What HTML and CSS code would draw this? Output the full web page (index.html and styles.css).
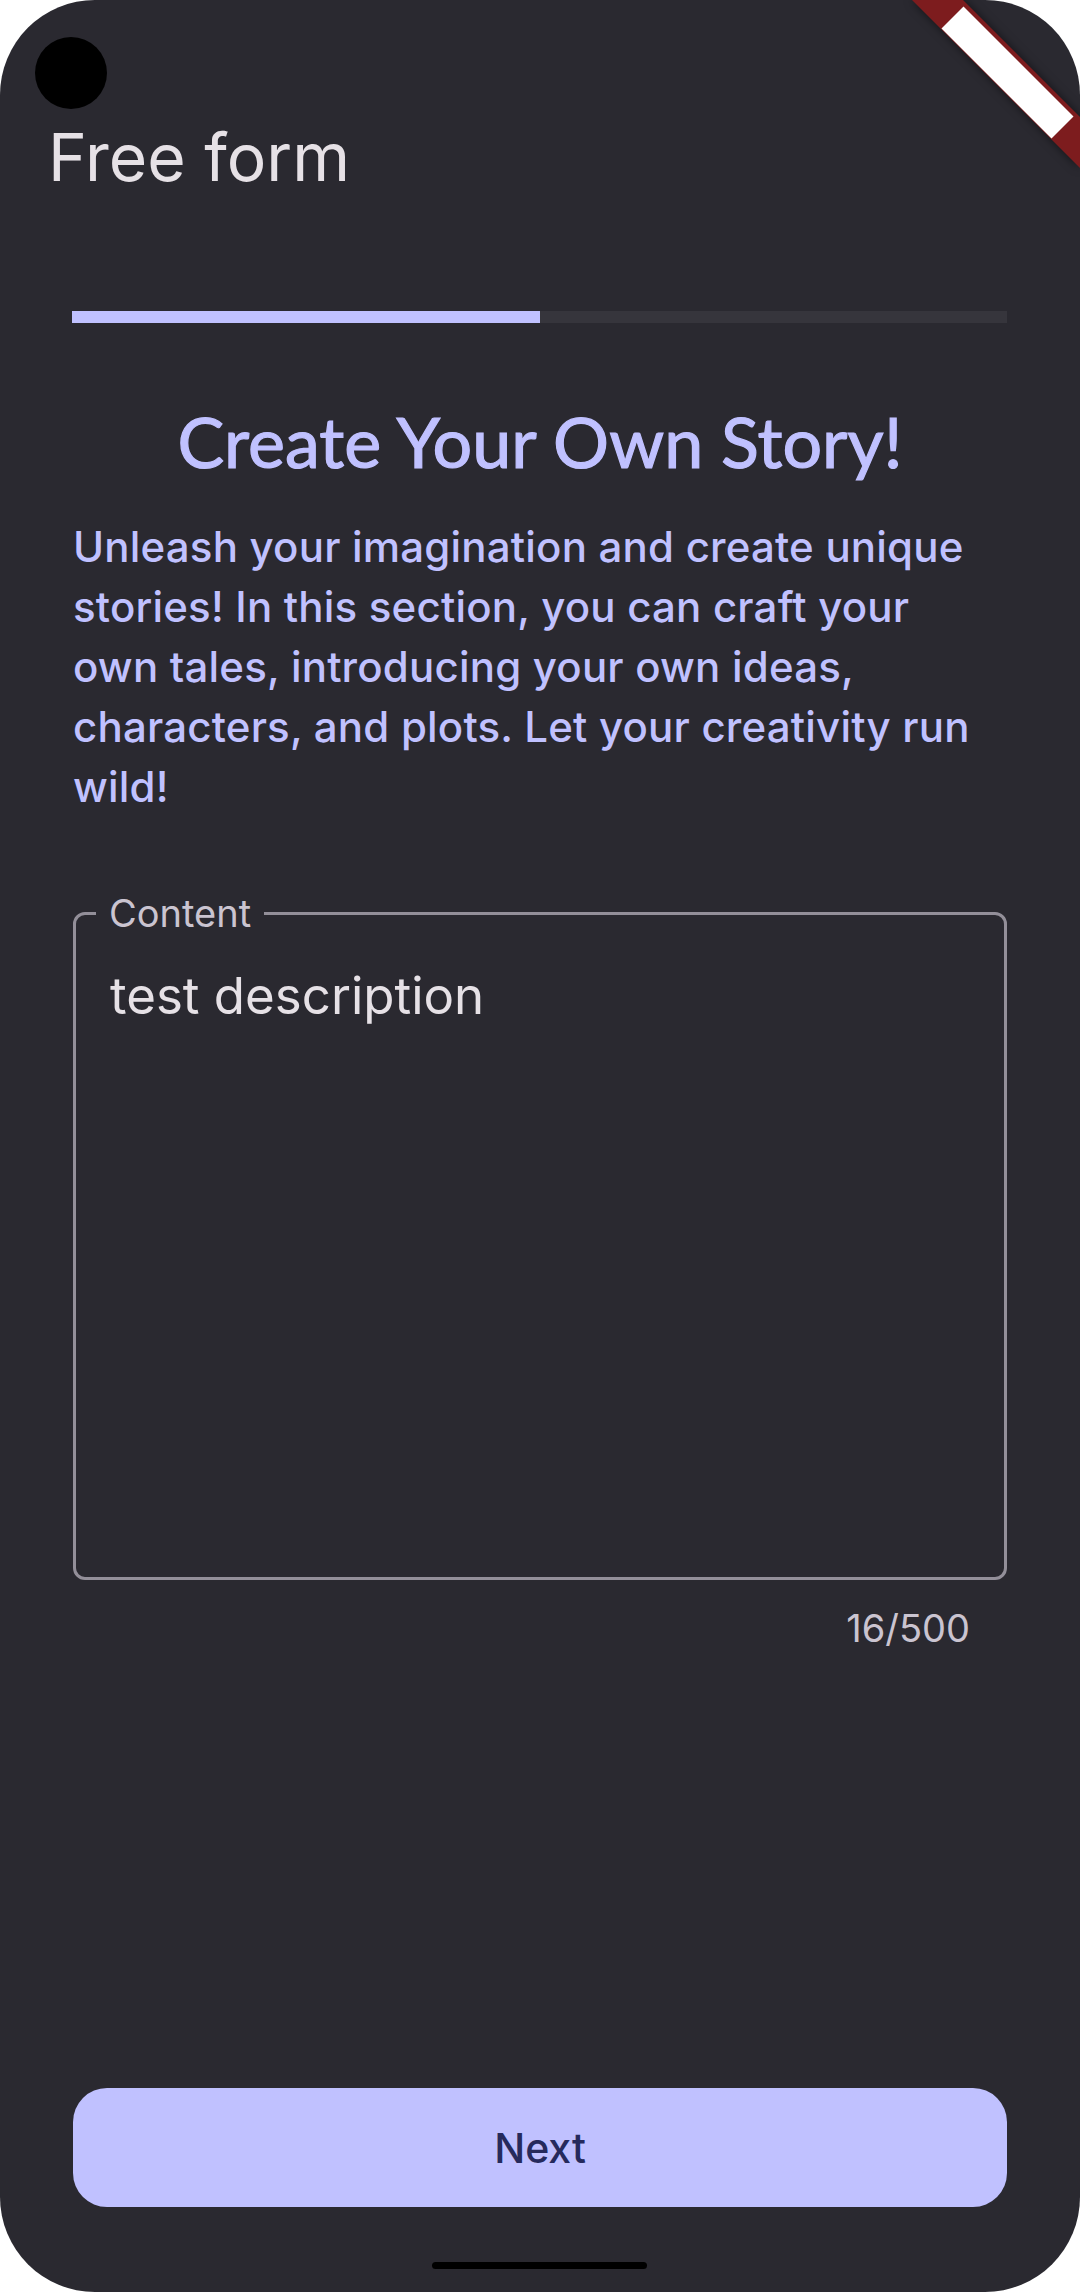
FILE: index.html
```html
<!DOCTYPE html>
<html lang="en">
<head>
<meta charset="utf-8">
<title>Free form</title>
<link rel="stylesheet" href="styles.css">
</head>
<body>
<div class="phone">
  <div class="camera"></div>
  <svg class="debug-banner" width="200" height="200" viewBox="0 0 200 200">
    <g class="banner-group">
      <polygon points="32,0 83,0 200,117 200,168" fill="#7d1c1e"/>
      <polygon points="61.5,28.5 83.5,6.5 193.5,116.5 171.5,138.5" fill="#ffffff"/>
    </g>
  </svg>

  <header class="appbar">
    <h1 class="appbar-title">Free form</h1>
  </header>

  <div class="progress"><div class="progress-fill" style="width:50%"></div></div>

  <h2 class="heading">Create Your Own Story!</h2>
  <p class="intro">Unleash your imagination and create unique stories! In this section, you can craft your own tales, introducing your own ideas, characters, and plots. Let your creativity run wild!</p>

  <fieldset class="field">
    <legend class="field-label">Content</legend>
    <div class="field-input">test description</div>
  </fieldset>
  <div class="counter">16/500</div>

  <div class="spacer"></div>

  <button class="next-btn">Next</button>

  <div class="home-indicator"></div>
</div>
</body>
</html>
```

FILE: styles.css
```css
* { box-sizing: border-box; }
html, body { margin: 0; padding: 0; background: #ffffff; }
body { width: 1080px; height: 2292px; overflow: hidden; }

.phone {
  position: relative;
  width: 1080px;
  height: 2292px;
  border-radius: 95px;
  overflow: hidden;
  background: #2a2930;
  display: flex;
  flex-direction: column;
  font-family: "Inter", "Roboto", sans-serif;
}

.camera {
  position: absolute;
  left: 35px;
  top: 37px;
  width: 72px;
  height: 72px;
  border-radius: 50%;
  background: #000;
  z-index: 5;
}

.debug-banner {
  position: absolute;
  top: 0;
  right: 0;
  z-index: 6;
}
.banner-group { filter: drop-shadow(0 0 5px rgba(0,0,0,0.55)); }

.appbar { margin-top: 117px; padding-left: 48px; }
.appbar-title {
  margin: 0;
  font-size: 66px;
  line-height: 80px;
  font-weight: 400;
  color: #e6e1e6;
}

.progress {
  margin: 114px 73px 0 72px;
  height: 12px;
  background: #36353c;
}
.progress-fill { height: 100%; background: #c0c1ff; }

.heading {
  margin: 76px 0 0 0;
  text-align: center;
  font-family: "Lato", "Noto Sans", sans-serif;
  font-size: 70px;
  line-height: 84px;
  font-weight: 400;
  color: #c0c1ff;
  -webkit-text-stroke: 1.2px #c0c1ff;
}

.intro {
  margin: 34px 80px 0 73px;
  font-size: 42px;
  line-height: 60px;
  letter-spacing: 0.2px;
  font-weight: 500;
  color: #c0c1ff;
}

.field {
  margin: 76px 73px 0 73px;
  padding: 0;
  border: 3px solid #938f99;
  border-radius: 12px;
  min-width: 0;
}
.field-label {
  margin-left: 20px;
  padding: 0 13px;
  font-size: 38px;
  line-height: 40px;
  color: #cac4d0;
}
.field-input {
  height: 644px;
  padding: 33px 34px 0 34px;
  font-size: 51px;
  line-height: 60px;
  color: #e6e1e6;
}

.counter {
  margin: 28px 110px 0 0;
  text-align: right;
  font-size: 38px;
  line-height: 40px;
  color: #cac4d0;
}

.spacer { flex: 1; }

.next-btn {
  margin: 0 73px 85px 73px;
  height: 119px;
  border: none;
  border-radius: 34px;
  background: #c0c1ff;
  color: #262a5c;
  font-family: "Inter", "Roboto", sans-serif;
  font-size: 41px;
  font-weight: 500;
  display: flex;
  align-items: center;
  justify-content: center;
}

.home-indicator {
  position: absolute;
  left: 432px;
  top: 2262px;
  width: 215px;
  height: 7px;
  border-radius: 4px;
  background: #000;
}
```
